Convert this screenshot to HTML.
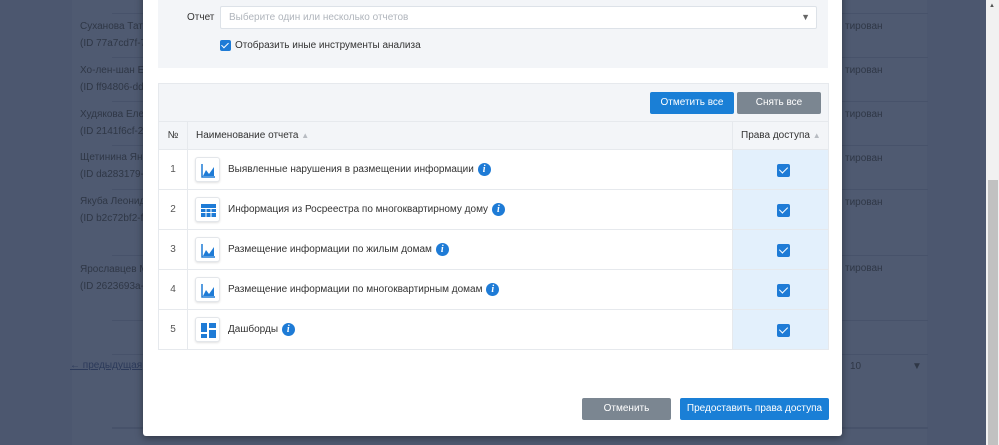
<!DOCTYPE html>
<html><head><meta charset="utf-8"><style>
*{box-sizing:border-box;margin:0;padding:0}
body{width:999px;height:445px;overflow:hidden;background:#4c576f;font-family:"Liberation Sans",sans-serif;position:relative}
.pg{position:absolute;left:72px;top:0;width:855px;height:445px;background:#4f5a71}
.bt{position:absolute;color:#2f3746;font-size:10px;line-height:12px}
.hl{position:absolute;left:112px;width:816px;height:1px;background:#47526a}
.sb{position:absolute;left:986px;top:0;width:13px;height:445px;background:#f1f1f1}
.sb i{position:absolute;left:2px;top:180px;width:10px;height:265px;background:#c1c1c1}
.modal{position:absolute;left:143px;top:-10px;width:699px;height:446px;background:#fff;border-radius:3px;box-shadow:0 2px 8px rgba(0,0,0,.4)}
.abs{position:absolute}
.fp{left:15px;top:10px;width:670px;height:68px;background:#f3f5f8}
.sel{left:77px;top:16px;width:597px;height:23px;background:#fff;border:1px solid #dde2e8;border-radius:2px;font-size:10px;color:#b0b5bc;padding:5px 8px}
.cb{width:11px;height:11px;background:#1e7bd6;border-radius:2px}
.cb:after{content:"";position:absolute;left:3px;top:1px;width:3px;height:6px;border:solid #fff;border-width:0 1.5px 1.5px 0;transform:rotate(45deg)}
.btn{color:#fff;font-size:10px;text-align:center;border-radius:2px;line-height:22px;font-family:"Liberation Sans Narrow","Liberation Sans",sans-serif}
table{border-collapse:collapse;position:absolute;left:15px;top:131px;width:671px;font-size:10px;color:#333}
td,th{border:1px solid #e6e9ed;height:40px;vertical-align:middle}
th{height:28px;background:#f3f5f8;font-weight:normal;text-align:left;padding-left:8px}
td.n{width:29px;text-align:center;color:#555}
td.r{width:96px;background:#e3f0fc;position:relative}
.ic{display:inline-block;vertical-align:middle;width:25px;height:25px;border:1px solid #e3e6ea;border-radius:3px;box-shadow:0 1px 2px rgba(0,0,0,.12);margin:0 8px 0 7px;background:#fff;position:relative}
.ic svg{position:absolute;left:4px;top:4px}
.inf{display:inline-block;vertical-align:middle;width:13px;height:13px;border-radius:50%;background:#1e7bd6;color:#fff;font:italic bold 10px/13px "Liberation Serif",serif;text-align:center;margin-left:1px}
.big{width:13px;height:13px;left:44px;top:14px}
.big:after{left:4px;top:1px;width:4px;height:7px}
.tri{color:#b8bcc2;font-size:8px}
</style></head><body>
<div class="pg"></div>
<div class="bt" style="left:80px;top:21px">Суханова Татья<br><span style="line-height:22px">(ID 77a7cd7f-77</span></div>
<div class="bt" style="left:80px;top:65px">Хо-лен-шан Ел<br><span style="line-height:22px">(ID ff94806-dda</span></div>
<div class="bt" style="left:80px;top:109px">Худякова Елена<br><span style="line-height:22px">(ID 2141f6cf-2f9</span></div>
<div class="bt" style="left:80px;top:152px">Щетинина Яна<br><span style="line-height:22px">(ID da283179-79</span></div>
<div class="bt" style="left:80px;top:196px">Якуба Леонид С<br><span style="line-height:22px">(ID b2c72bf2-fef</span></div>
<div class="bt" style="left:80px;top:264px">Ярославцев Ма<br><span style="line-height:22px">(ID 2623693a-25</span></div>
<div class="bt" style="left:70px;top:360px;color:#2c3a5a;text-decoration:underline">← предыдущая</div>
<div class="bt" style="left:845px;top:21px">тирован</div>
<div class="bt" style="left:845px;top:65px">тирован</div>
<div class="bt" style="left:845px;top:109px">тирован</div>
<div class="bt" style="left:845px;top:153px">тирован</div>
<div class="bt" style="left:845px;top:197px">тирован</div>
<div class="bt" style="left:845px;top:263px">тирован</div>
<div class="bt" style="left:850px;top:361px">10</div>
<div class="bt" style="left:912px;top:361px">▼</div>
<div class="hl" style="top:13px"></div><div class="hl" style="top:57px"></div><div class="hl" style="top:101px"></div><div class="hl" style="top:145px"></div><div class="hl" style="top:189px"></div><div class="hl" style="top:255px"></div><div class="hl" style="top:320px"></div><div class="hl" style="top:354px"></div><div class="hl" style="top:427px;height:2px"></div>
<div class="sb"><i></i><span style="position:absolute;left:3px;top:3px;font-size:6px;color:#555">▲</span></div>

<div class="modal">
 <div class="abs fp"></div>
 <div class="abs" style="left:44px;top:22px;font-size:10px;color:#333">Отчет</div>
 <div class="abs sel">Выберите один или несколько отчетов<span style="position:absolute;right:6px;top:5px;color:#666;font-size:9px">▼</span></div>
 <div class="abs cb" style="left:77px;top:50px"></div>
 <div class="abs" style="left:92px;top:50px;font-size:10px;color:#333">Отобразить иные инструменты анализа</div>

 <div class="abs" style="left:15px;top:93px;width:671px;height:38px;background:#f3f5f8;border:1px solid #e6e9ed;border-bottom:none"></div>
 <div class="abs btn" style="left:507px;top:102px;width:84px;background:#1a7fd6">Отметить все</div>
 <div class="abs btn" style="left:594px;top:102px;width:84px;background:#7b8691">Снять все</div>

 <table>
 <tr><th style="width:29px;text-align:center;padding:0">№</th><th>Наименование отчета <span class="tri">▲</span></th><th style="width:96px">Права доступа <span class="tri">▲</span></th></tr>
 <tr><td class="n">1</td><td><span class="ic"><svg width="17" height="17" viewBox="0 0 17 17"><path d="M2 2v13h13" fill="none" stroke="#1e7bd6" stroke-width="1.5"/><path d="M3 14l3-6 3 4 5-7v9z" fill="#1e7bd6"/></svg></span>Выявленные нарушения в размещении информации <span class="inf">i</span></td><td class="r"><span class="abs cb big"></span></td></tr>
 <tr><td class="n">2</td><td><span class="ic"><svg width="17" height="17" viewBox="0 0 17 17"><rect x="1" y="2" width="15" height="13" fill="#1e7bd6"/><path d="M1 6.5h15M1 10.5h15M6 6v9M11 6v9" stroke="#fff" stroke-width="1"/></svg></span>Информация из Росреестра по многоквартирному дому <span class="inf">i</span></td><td class="r"><span class="abs cb big"></span></td></tr>
 <tr><td class="n">3</td><td><span class="ic"><svg width="17" height="17" viewBox="0 0 17 17"><path d="M2 2v13h13" fill="none" stroke="#1e7bd6" stroke-width="1.5"/><path d="M3 14l3-6 3 4 5-7v9z" fill="#1e7bd6"/></svg></span>Размещение информации по жилым домам <span class="inf">i</span></td><td class="r"><span class="abs cb big"></span></td></tr>
 <tr><td class="n">4</td><td><span class="ic"><svg width="17" height="17" viewBox="0 0 17 17"><path d="M2 2v13h13" fill="none" stroke="#1e7bd6" stroke-width="1.5"/><path d="M3 14l3-6 3 4 5-7v9z" fill="#1e7bd6"/></svg></span>Размещение информации по многоквартирным домам <span class="inf">i</span></td><td class="r"><span class="abs cb big"></span></td></tr>
 <tr><td class="n">5</td><td><span class="ic"><svg width="17" height="17" viewBox="0 0 17 17"><rect x="1" y="1" width="6" height="9" fill="#1e7bd6"/><rect x="9" y="1" width="7" height="5" fill="#1e7bd6"/><rect x="1" y="12" width="6" height="4" fill="#1e7bd6"/><rect x="9" y="8" width="7" height="8" fill="#1e7bd6"/></svg></span>Дашборды <span class="inf">i</span></td><td class="r"><span class="abs cb big"></span></td></tr>
 </table>

 <div class="abs btn" style="left:439px;top:408px;width:89px;background:#7b8691">Отменить</div>
 <div class="abs btn" style="left:537px;top:408px;width:149px;background:#1a7fd6">Предоставить права доступа</div>
</div>
</body></html>
